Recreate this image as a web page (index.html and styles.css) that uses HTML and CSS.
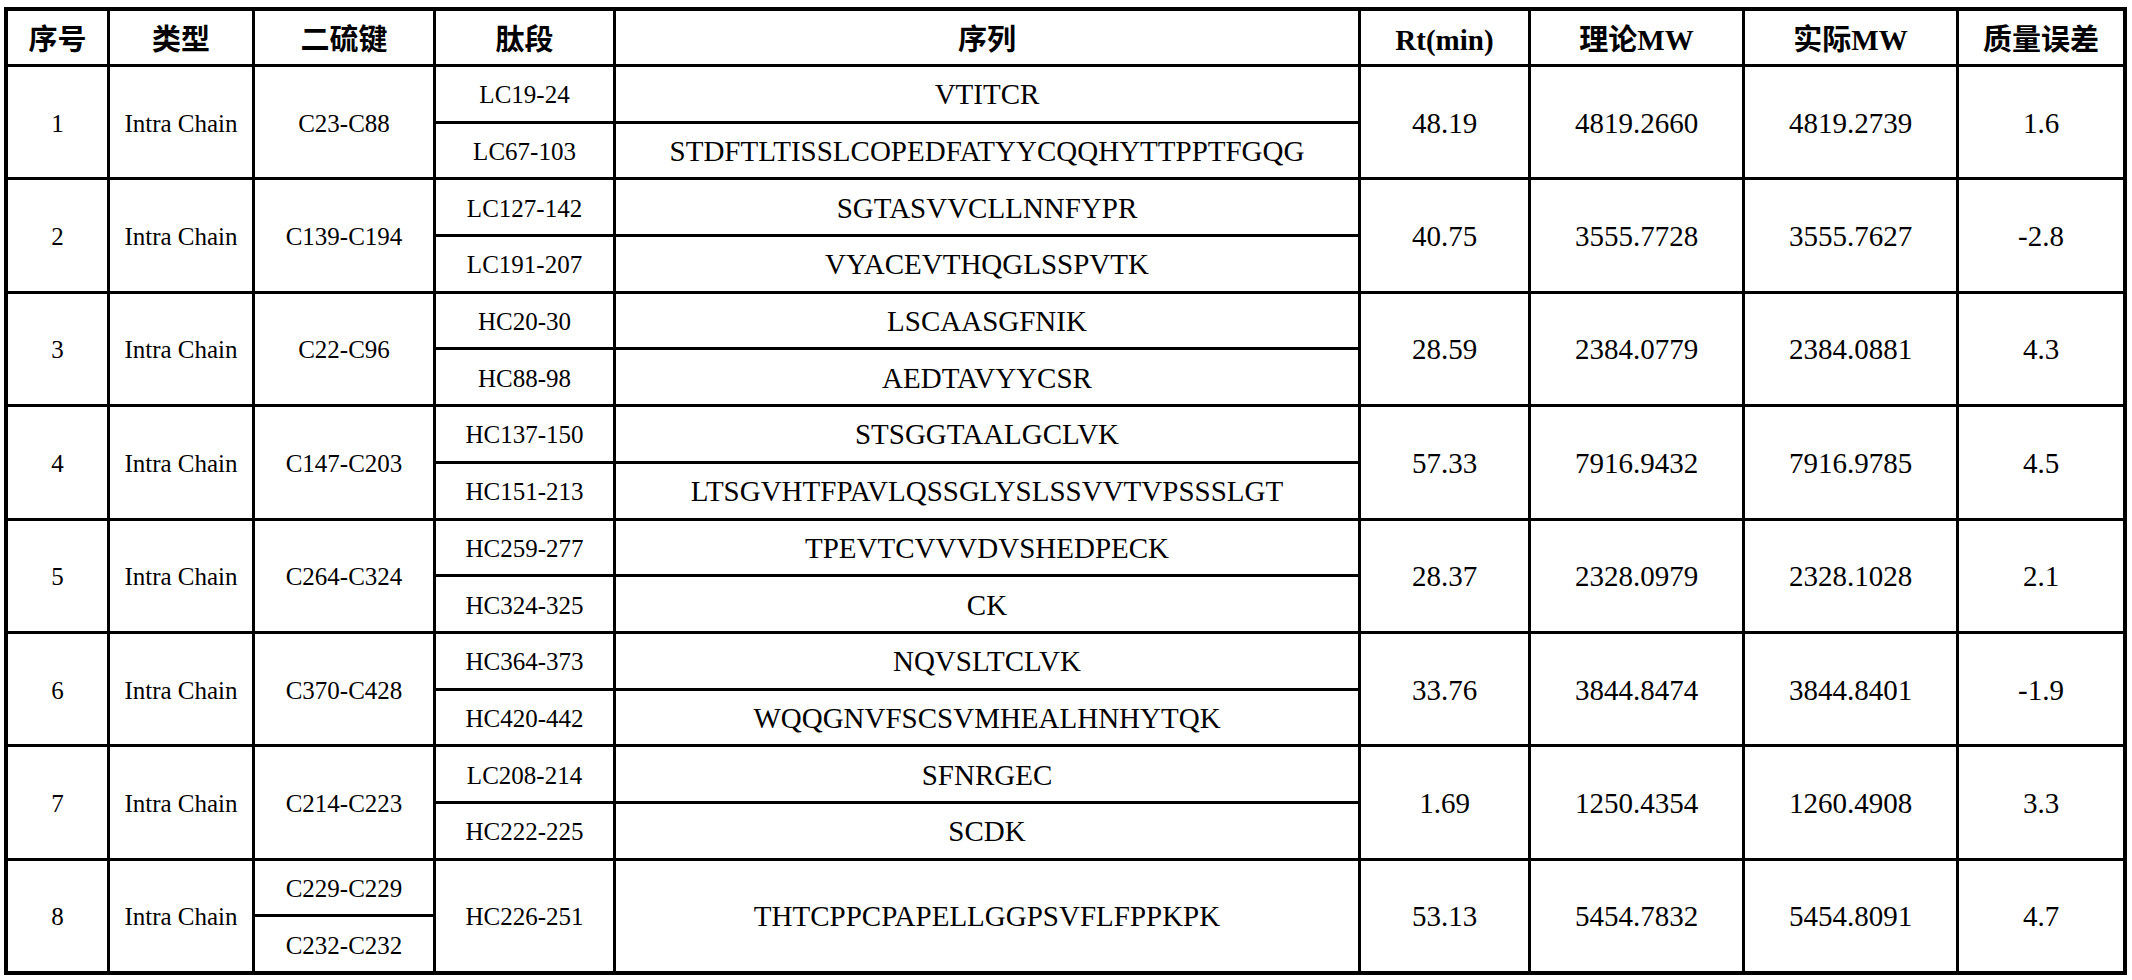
FILE: index.html
```html
<!DOCTYPE html>
<html lang="zh-CN">
<head>
<meta charset="utf-8">
<title>二硫键鉴定结果</title>
<link rel="stylesheet" href="styles.css">
</head>
<body>
<div class="grid">
  <div class="th">序号</div>
  <div class="th">类型</div>
  <div class="th">二硫键</div>
  <div class="th">肽段</div>
  <div class="th">序列</div>
  <div class="th">Rt(min)</div>
  <div class="th">理论MW</div>
  <div class="th">实际MW</div>
  <div class="th">质量误差</div>

  <div class="td r2">1</div>
  <div class="td r2">Intra Chain</div>
  <div class="td r2">C23-C88</div>
  <div class="td">LC19-24</div>
  <div class="td big">VTITCR</div>
  <div class="td big r2">48.19</div>
  <div class="td big r2">4819.2660</div>
  <div class="td big r2">4819.2739</div>
  <div class="td big r2">1.6</div>
  <div class="td">LC67-103</div>
  <div class="td big">STDFTLTISSLCOPEDFATYYCQQHYTTPPTFGQG</div>

  <div class="td r2">2</div>
  <div class="td r2">Intra Chain</div>
  <div class="td r2">C139-C194</div>
  <div class="td">LC127-142</div>
  <div class="td big">SGTASVVCLLNNFYPR</div>
  <div class="td big r2">40.75</div>
  <div class="td big r2">3555.7728</div>
  <div class="td big r2">3555.7627</div>
  <div class="td big r2">-2.8</div>
  <div class="td">LC191-207</div>
  <div class="td big">VYACEVTHQGLSSPVTK</div>

  <div class="td r2">3</div>
  <div class="td r2">Intra Chain</div>
  <div class="td r2">C22-C96</div>
  <div class="td">HC20-30</div>
  <div class="td big">LSCAASGFNIK</div>
  <div class="td big r2">28.59</div>
  <div class="td big r2">2384.0779</div>
  <div class="td big r2">2384.0881</div>
  <div class="td big r2">4.3</div>
  <div class="td">HC88-98</div>
  <div class="td big">AEDTAVYYCSR</div>

  <div class="td r2">4</div>
  <div class="td r2">Intra Chain</div>
  <div class="td r2">C147-C203</div>
  <div class="td">HC137-150</div>
  <div class="td big">STSGGTAALGCLVK</div>
  <div class="td big r2">57.33</div>
  <div class="td big r2">7916.9432</div>
  <div class="td big r2">7916.9785</div>
  <div class="td big r2">4.5</div>
  <div class="td">HC151-213</div>
  <div class="td big">LTSGVHTFPAVLQSSGLYSLSSVVTVPSSSLGT</div>

  <div class="td r2">5</div>
  <div class="td r2">Intra Chain</div>
  <div class="td r2">C264-C324</div>
  <div class="td">HC259-277</div>
  <div class="td big">TPEVTCVVVDVSHEDPECK</div>
  <div class="td big r2">28.37</div>
  <div class="td big r2">2328.0979</div>
  <div class="td big r2">2328.1028</div>
  <div class="td big r2">2.1</div>
  <div class="td">HC324-325</div>
  <div class="td big">CK</div>

  <div class="td r2">6</div>
  <div class="td r2">Intra Chain</div>
  <div class="td r2">C370-C428</div>
  <div class="td">HC364-373</div>
  <div class="td big">NQVSLTCLVK</div>
  <div class="td big r2">33.76</div>
  <div class="td big r2">3844.8474</div>
  <div class="td big r2">3844.8401</div>
  <div class="td big r2">-1.9</div>
  <div class="td">HC420-442</div>
  <div class="td big">WQQGNVFSCSVMHEALHNHYTQK</div>

  <div class="td r2">7</div>
  <div class="td r2">Intra Chain</div>
  <div class="td r2">C214-C223</div>
  <div class="td">LC208-214</div>
  <div class="td big">SFNRGEC</div>
  <div class="td big r2">1.69</div>
  <div class="td big r2">1250.4354</div>
  <div class="td big r2">1260.4908</div>
  <div class="td big r2">3.3</div>
  <div class="td">HC222-225</div>
  <div class="td big">SCDK</div>

  <div class="td r2">8</div>
  <div class="td r2">Intra Chain</div>
  <div class="td">C229-C229</div>
  <div class="td r2">HC226-251</div>
  <div class="td big r2">THTCPPCPAPELLGGPSVFLFPPKPK</div>
  <div class="td big r2">53.13</div>
  <div class="td big r2">5454.7832</div>
  <div class="td big r2">5454.8091</div>
  <div class="td big r2">4.7</div>
  <div class="td">C232-C232</div>
</div>
</body>
</html>
```

FILE: styles.css
```css
html, body {
  margin: 0;
  padding: 0;
  background: #ffffff;
}

body {
  font-family: "Liberation Serif", "Noto Sans CJK SC", serif;
  color: #000000;
}

.grid {
  box-sizing: border-box;
  margin: 7px 0 0 4px;
  width: 2123px;
  height: 968px;
  padding: 4px;
  background: #000000;
  display: grid;
  grid-template-columns: 99px 142px 178px 177px 742px 167px 211px 211px 164px;
  grid-template-rows: 53px repeat(16, 1fr);
  gap: 3px;
}

.th,
.td {
  box-sizing: border-box;
  background: #ffffff;
  display: flex;
  align-items: center;
  justify-content: center;
  text-align: center;
  white-space: nowrap;
  line-height: 1;
}

.th {
  font-weight: bold;
  font-size: 29px;
  padding-top: 6px;
}

.td {
  font-size: 25px;
  padding-top: 2px;
}

.td.big {
  font-size: 29px;
}

.r2 {
  grid-row: span 2;
}
```
